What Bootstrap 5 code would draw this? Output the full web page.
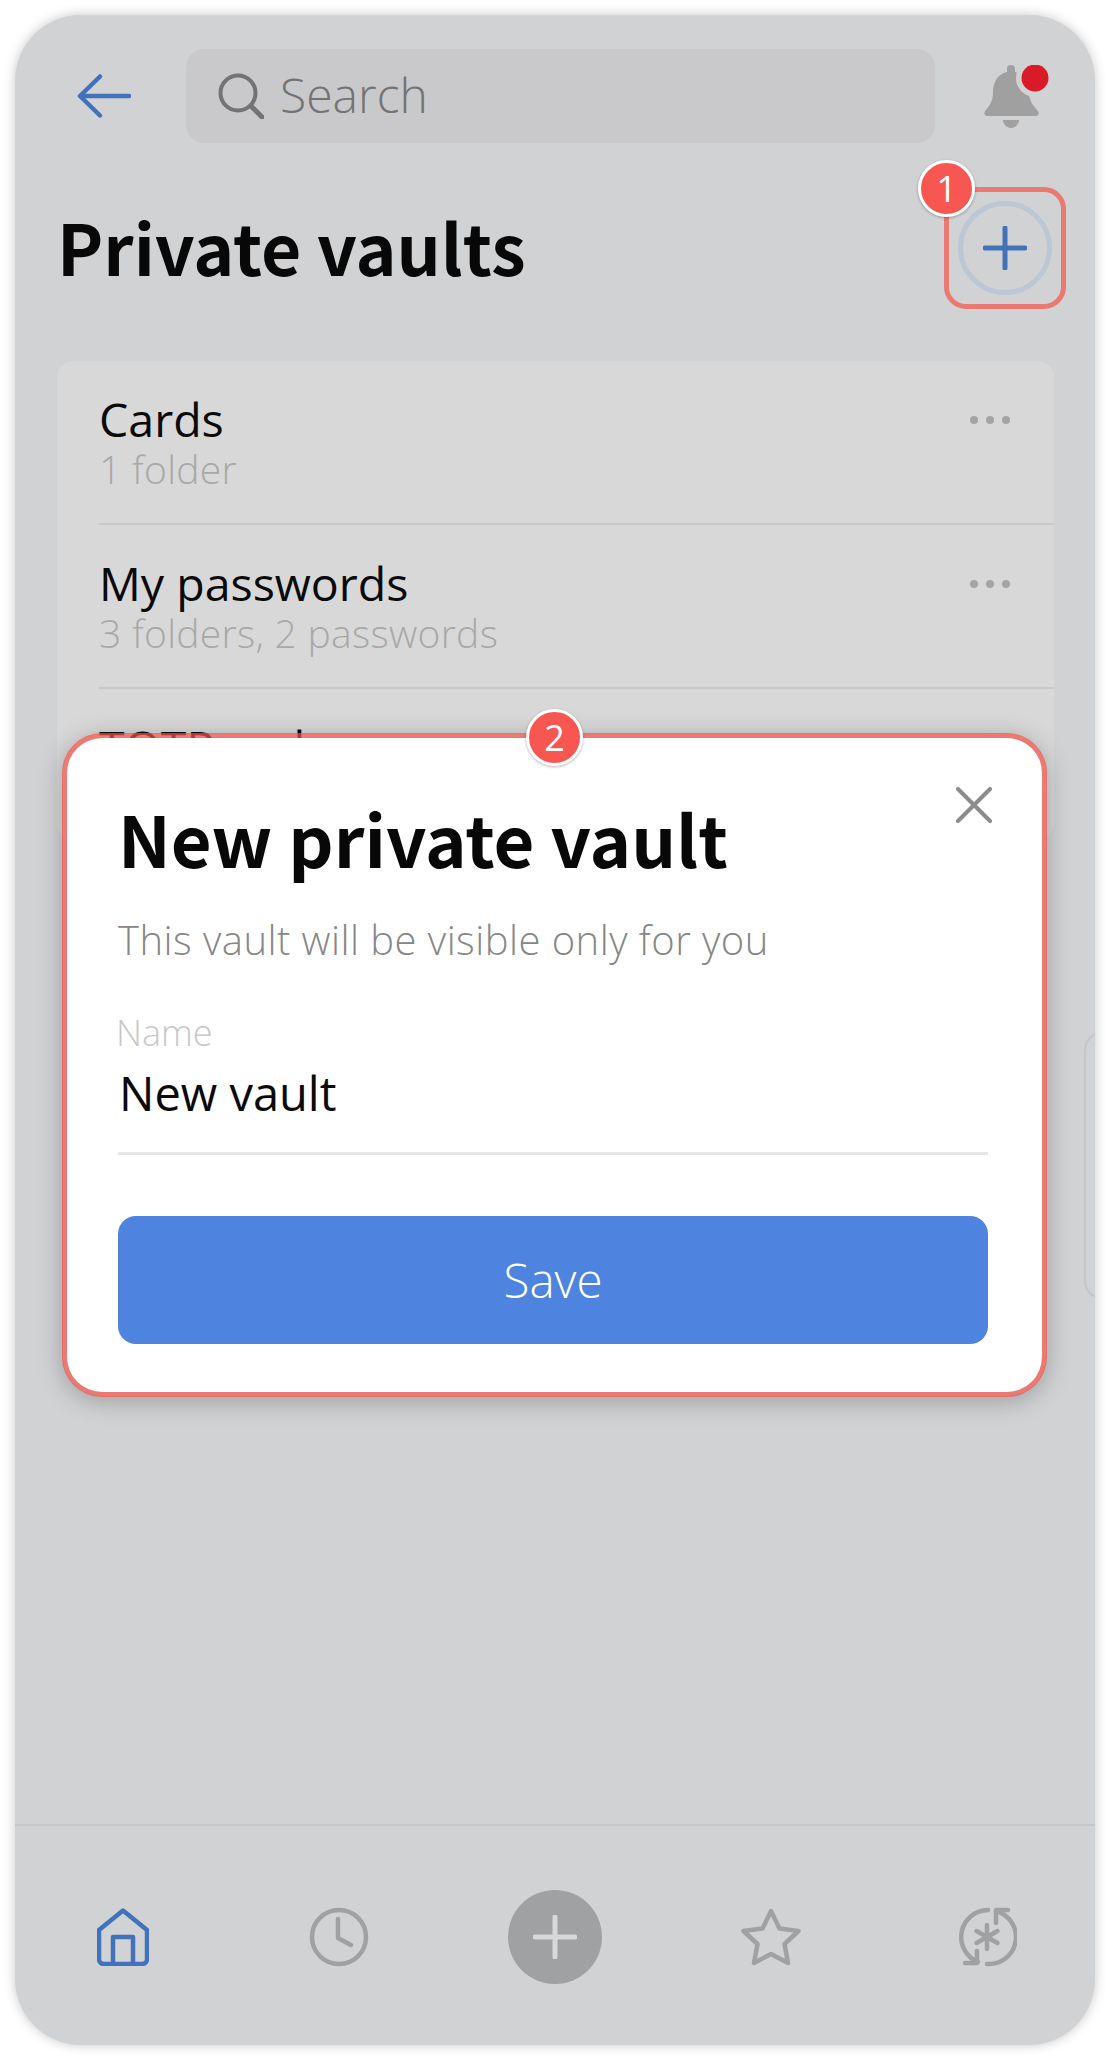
<!DOCTYPE html>
<html lang="en">
<head>
    <meta charset="UTF-8">
    <meta name="viewport" content="width=device-width, initial-scale=1.0">
    <title>Private vaults</title>
    <link href="https://cdn.jsdelivr.net/npm/bootstrap@5.3.0/dist/css/bootstrap.min.css" rel="stylesheet">
    <style>
        body {
            background: #fff;
            font-family: "Open Sans", "Liberation Sans", sans-serif;
        }
        .phone {
            width: 1080px;
            height: 2030px;
            margin: 15px;
            background: #d1d2d4;
            border-radius: 66px;
            box-shadow: 0 0 12px rgba(0, 0, 0, .22);
            overflow: hidden;
        }
        .topbar {
            padding: 34px 0 0 62px;
        }
        .back-btn {
            width: 54px;
            margin-right: 55px;
        }
        .search-box {
            width: 749px;
            height: 94px;
            margin-right: 49px;
            padding: 0 0 2px 32px;
            background: #c9c9cb;
            border-radius: 18px;
            color: #737373;
            font-size: 48px;
            font-weight: 300;
        }
        .search-box svg {
            margin: 2px 16px 0 0;
        }
        .head-row {
            margin-top: 44px;
            padding: 0 29px 0 42px;
        }
        .page-title {
            margin: 0 0 5px;
            font-family: "Noto Sans CJK SC", "Noto Sans", sans-serif;
            font-size: 69.500px;
            font-weight: 700;
            color: #080808;
        }
        .mark-box {
            width: 122px;
            height: 122px;
            border: 5px solid rgba(245, 82, 72, .7);
            border-radius: 22px;
        }
        .plus-ring {
            width: 94px;
            height: 94px;
            border: 5px solid #bcc6d4;
            border-radius: 50%;
        }
        .step-dot {
            width: 57px;
            height: 57px;
            background: #f85650;
            border: 3px solid #fff;
            border-radius: 50%;
            box-shadow: 0 1px 3px rgba(0, 0, 0, .3);
            color: #fff;
            font-size: 36px;
            font-weight: 400;
            line-height: 1;
            z-index: 5;
        }
        .step-one {
            left: -31px;
            top: -32px;
        }
        .step-two {
            left: 459px;
            top: -29px;
        }
        .vault-list {
            height: 479px;
            margin: 52px 41px 0 42px;
            background: #d8d8d8;
            border-radius: 16px;
            overflow: hidden;
        }
        .vault-row {
            height: 164px;
            margin-left: 42px;
            padding: 30px 44px 0 0;
            border-bottom: 2px solid #c9c9c9;
        }
        .vault-row:last-child {
            border-bottom: 0;
        }
        .vault-name {
            font-size: 46.500px;
            line-height: 56px;
            color: #0a0a0a;
        }
        .vault-sub {
            font-size: 39px;
            line-height: 44px;
            font-weight: 300;
            letter-spacing: .3px;
            color: #a8a8a8;
        }
        .more-dots {
            margin-top: 25px;
            gap: 8px;
        }
        .more-dots i {
            width: 8px;
            height: 8px;
            background: #a5a5a5;
            border-radius: 50%;
        }
        .side-peek {
            left: 1069px;
            top: 1017px;
            width: 60px;
            height: 267px;
            border: 2px solid #c5c6c8;
            border-radius: 18px;
        }
        .new-dialog {
            left: 47px;
            top: 718px;
            width: 985px;
            height: 664px;
            padding: 49px 54px 0 51px;
            background: #fff;
            background-clip: padding-box;
            border: 5px solid rgba(245, 82, 72, .7);
            border-radius: 40px;
            box-shadow: 0 4px 24px rgba(0, 0, 0, .25);
            z-index: 3;
        }
        .dialog-close {
            top: 49px;
            right: 50px;
            line-height: 0;
        }
        .dialog-title {
            margin: 0;
            font-family: "Noto Sans CJK SC", "Noto Sans", sans-serif;
            font-size: 70.500px;
            font-weight: 700;
            line-height: 100px;
            color: #080808;
        }
        .dialog-sub {
            margin-top: 28px;
            font-size: 40px;
            line-height: 50px;
            font-weight: 300;
            letter-spacing: .45px;
            color: #878787;
        }
        .field-label {
            margin: 48px 0 0 -2px;
            font-size: 36px;
            line-height: 40px;
            font-weight: 300;
            color: #c8c8c8;
        }
        .field-value {
            padding: 12px 0 31px 1px;
            border-bottom: 3px solid #e6e6e6;
            font-size: 47px;
            line-height: 56px;
            color: #0a0a0a;
        }
        .btn.save-btn {
            height: 128px;
            margin-top: 61px;
            background: #4f83e0;
            border: 0;
            border-radius: 18px;
            font-size: 47.500px;
            font-weight: 300;
        }
        .bottom-nav {
            height: 221px;
            padding-top: 3px;
            border-top: 2px solid #c5c6c8;
        }
        .nav-cell {
            width: 216px;
        }
        .add-round {
            width: 94px;
            height: 94px;
            background: #a0a1a2;
            border-radius: 50%;
        }
    </style>
</head>
<body class="m-0">
    <div class="phone position-relative d-flex flex-column">
        <div class="topbar d-flex align-items-center">
            <div class="back-btn d-flex">
                <svg width="54" height="44" viewBox="0 0 54 44" fill="none" stroke="#4372bd" stroke-width="4.5" stroke-linecap="round" stroke-linejoin="round"><path d="M52 22H3M23 2.500L3 22l20 19.500"/></svg>
            </div>
            <div class="search-box d-flex align-items-center">
                <svg width="46" height="46" viewBox="0 0 46 46" fill="none" stroke="#737373" stroke-width="4" stroke-linecap="round"><circle cx="20" cy="20" r="17.500"/><path d="M33 33l11 11" stroke-width="5"/></svg>
                <span>Search</span>
            </div>
            <svg width="66" height="63" viewBox="0 0 66 63">
                <path fill="#a0a0a0" d="M23 7V4a4 4 0 0 1 8 0v3c9 2 14 10 14 20 0 10 5 14 9 19 1.500 2 .5 5-2 5H3c-2.500 0-3.500-3-2-5 4-5 8-9 8-19C9 17 14 9 23 7zM19 55h16c0 4-3.500 8-8 8s-8-4-8-8z"/>
                <circle cx="51" cy="13" r="19" fill="#d1d2d4"/>
                <circle cx="51" cy="13" r="13.500" fill="#d81b27"/>
            </svg>
        </div>

        <div class="head-row d-flex justify-content-between align-items-center">
            <h1 class="page-title">Private vaults</h1>
            <div class="mark-box position-relative d-flex align-items-center justify-content-center">
                <span class="step-dot step-one position-absolute d-flex align-items-center justify-content-center">1</span>
                <div class="plus-ring d-flex align-items-center justify-content-center">
                    <svg width="44" height="44" viewBox="0 0 44 44" stroke="#4272b8" stroke-width="5" stroke-linecap="round"><path d="M22 2v40M2 22h40"/></svg>
                </div>
            </div>
        </div>

        <div class="vault-list">
            <div class="vault-row d-flex justify-content-between">
                <div>
                    <div class="vault-name">Cards</div>
                    <div class="vault-sub">1 folder</div>
                </div>
                <div class="more-dots d-flex"><i></i><i></i><i></i></div>
            </div>
            <div class="vault-row d-flex justify-content-between">
                <div>
                    <div class="vault-name">My passwords</div>
                    <div class="vault-sub">3 folders, 2 passwords</div>
                </div>
                <div class="more-dots d-flex"><i></i><i></i><i></i></div>
            </div>
            <div class="vault-row d-flex justify-content-between">
                <div>
                    <div class="vault-name">TOTP codes</div>
                </div>
            </div>
        </div>

        <div class="side-peek position-absolute"></div>

        <div class="new-dialog position-absolute">
            <span class="step-dot step-two position-absolute d-flex align-items-center justify-content-center">2</span>
            <div class="dialog-close position-absolute">
                <svg width="36" height="36" viewBox="0 0 36 36" stroke="#8c8c8c" stroke-width="4" stroke-linecap="round"><path d="M2 2l32 32M34 2L2 34"/></svg>
            </div>
            <h2 class="dialog-title">New private vault</h2>
            <div class="dialog-sub">This vault will be visible only for you</div>
            <div class="field-label">Name</div>
            <div class="field-value">New vault</div>
            <button type="button" class="btn btn-primary save-btn w-100">Save</button>
        </div>

        <div class="flex-grow-1"></div>

        <div class="bottom-nav d-flex align-items-center">
            <div class="nav-cell d-flex justify-content-center">
                <svg width="52" height="58" viewBox="0 0 52 58" fill="none" stroke="#4372bd" stroke-width="4.500" stroke-linejoin="round"><path d="M26 2.500L50 22v29a5 5 0 0 1-5 5H7a5 5 0 0 1-5-5V22z"/><path d="M16 56V29h20v27"/></svg>
            </div>
            <div class="nav-cell d-flex justify-content-center">
                <svg width="60" height="60" viewBox="0 0 60 60" fill="none" stroke="#a0a1a3" stroke-width="4.500" stroke-linecap="round" stroke-linejoin="round"><circle cx="30" cy="30" r="27"/><path d="M29 12v19l13 7"/></svg>
            </div>
            <div class="nav-cell d-flex justify-content-center">
                <div class="add-round d-flex align-items-center justify-content-center">
                    <svg width="44" height="44" viewBox="0 0 44 44" stroke="#d8d8d8" stroke-width="5" stroke-linecap="round"><path d="M22 2v40M2 22h40"/></svg>
                </div>
            </div>
            <div class="nav-cell d-flex justify-content-center">
                <svg width="60" height="58" viewBox="0 0 60 58" fill="none" stroke="#a0a1a3" stroke-width="4.500" stroke-linejoin="round"><path d="M30 3l8.500 17.500 19 2.500-14 13 3.500 19L30 46l-17 9 3.500-19-14-13 19-2.500z"/></svg>
            </div>
            <div class="nav-cell d-flex justify-content-center">
                <svg width="60" height="60" viewBox="0 0 60 60" fill="none" stroke="#a0a1a3" stroke-width="4.500" stroke-linecap="round" stroke-linejoin="round">
                    <path d="M31 3A27 27 0 0 0 21 55"/>
                    <path d="M20 44v12H8"/>
                    <path d="M30 57A27 27 0 0 0 39 4"/>
                    <path d="M39 16V3h12"/>
                    <path d="M30 18v24M19.500 24l21 12M40.500 24l-21 12"/>
                </svg>
            </div>
        </div>
    </div>
    <script src="https://cdn.jsdelivr.net/npm/bootstrap@5.3.0/dist/js/bootstrap.bundle.min.js"></script>
</body>
</html>
